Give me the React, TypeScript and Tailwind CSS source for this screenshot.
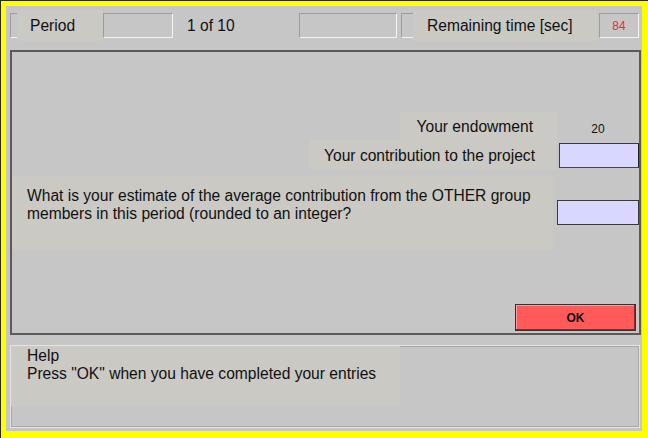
import React from "react";

const sunken = "border border-t-[#9c9c9c] border-l-[#9c9c9c] border-b-[#f2f2f2] border-r-[#f2f2f2]";

export default function App() {
  return (
    <div className="w-[648px] h-[438px] bg-[#2a2a2a] pt-px pl-px font-['Liberation_Sans',Arial,sans-serif] text-[#111]">
      <div className="w-[647px] h-[437px] border-[#ffff00] border-t-[5px] border-l-[5px] border-r-[6px] border-b-[7px] bg-[#c6c6c6]">
        {/* Header */}
        <div className="flex h-[44px] items-start pt-[7px] text-[15.6px]">
          <div className={`ml-[4px] w-[7px] h-[25px] border-r-0 ${sunken}`} />
          <div className="w-[86px] h-[31px] -mt-[3px] bg-[#cac9c4] flex items-center pl-[13px]">Period</div>
          <div className={`w-[70px] h-[25px] ${sunken}`} />
          <div className="w-[126px] h-[25px] flex items-center pl-[14px]">1 of 10</div>
          <div className={`w-[98px] h-[25px] ${sunken}`} />
          <div className={`ml-[4px] w-[12px] h-[25px] border-r-0 ${sunken}`} />
          <div className="w-[184px] h-[31px] -mt-[3px] bg-[#cac9c4] flex items-center pl-[14px]">Remaining time [sec]</div>
          <div className={`ml-[2px] w-[40px] h-[25px] flex items-center justify-center text-[12px] text-[#f02828] ${sunken}`}>84</div>
        </div>

        {/* Main panel */}
        <div className="ml-[4px] w-[631px] h-[285px] border-2 border-[#5a5a5a] text-[15.6px]">
          <div className="flex mt-[60px] h-[28px]">
            <div className="ml-[388px] w-[157px] bg-[#cac9c4] flex items-center justify-end pr-[24px] pt-[2px]">Your endowment</div>
            <div className="w-[82px] flex items-center justify-center text-[12px] pt-[6px]">20</div>
          </div>
          <div className="flex h-[30px]">
            <div className="ml-[298px] w-[247px] bg-[#cac9c4] flex items-center justify-end pr-[22px] pt-[1px]">Your contribution to the project</div>
            <div className="ml-[2px] mt-[3px] w-[80px] h-[25px] bg-[#d8d8ff] border border-[#3a3a3a] border-b-[#444] border-r-[#222]" />
          </div>
          <div className="flex mt-[6px]">
            <div className="w-[541px] h-[74px] bg-[#cac9c4] pl-[15px] pt-[11px] leading-[18px]">
              What is your estimate of the average contribution from the OTHER group
              <br />
              members in this period (rounded to an integer?
            </div>
            <div className="ml-[4px] mt-[24px] w-[82px] h-[25px] bg-[#d8d8ff] border border-[#3a3a3a]" />
          </div>
          <div className="ml-[503px] mt-[54px] w-[121px] h-[27px] bg-[#ff5a5a] border border-[#333] shadow-[inset_-1px_-1px_0_#8a2a2a,inset_1px_1px_0_#ff9a9a] flex items-center justify-center text-[12px] font-bold">
            OK
          </div>
        </div>

        {/* Help panel */}
        <div className="ml-[4px] mt-[10px] w-[630px] h-[83px] border border-[#e4e4e4] shadow-[inset_1px_1px_0_#a8a8a8,inset_-1px_-1px_0_#a8a8a8] text-[15.6px]">
          <div className="w-[389px] h-[60px] bg-[#cac9c4] pl-[16px] pt-px leading-[18px]">
            Help
            <br />
            Press "OK" when you have completed your entries
          </div>
        </div>
      </div>
    </div>
  );
}
